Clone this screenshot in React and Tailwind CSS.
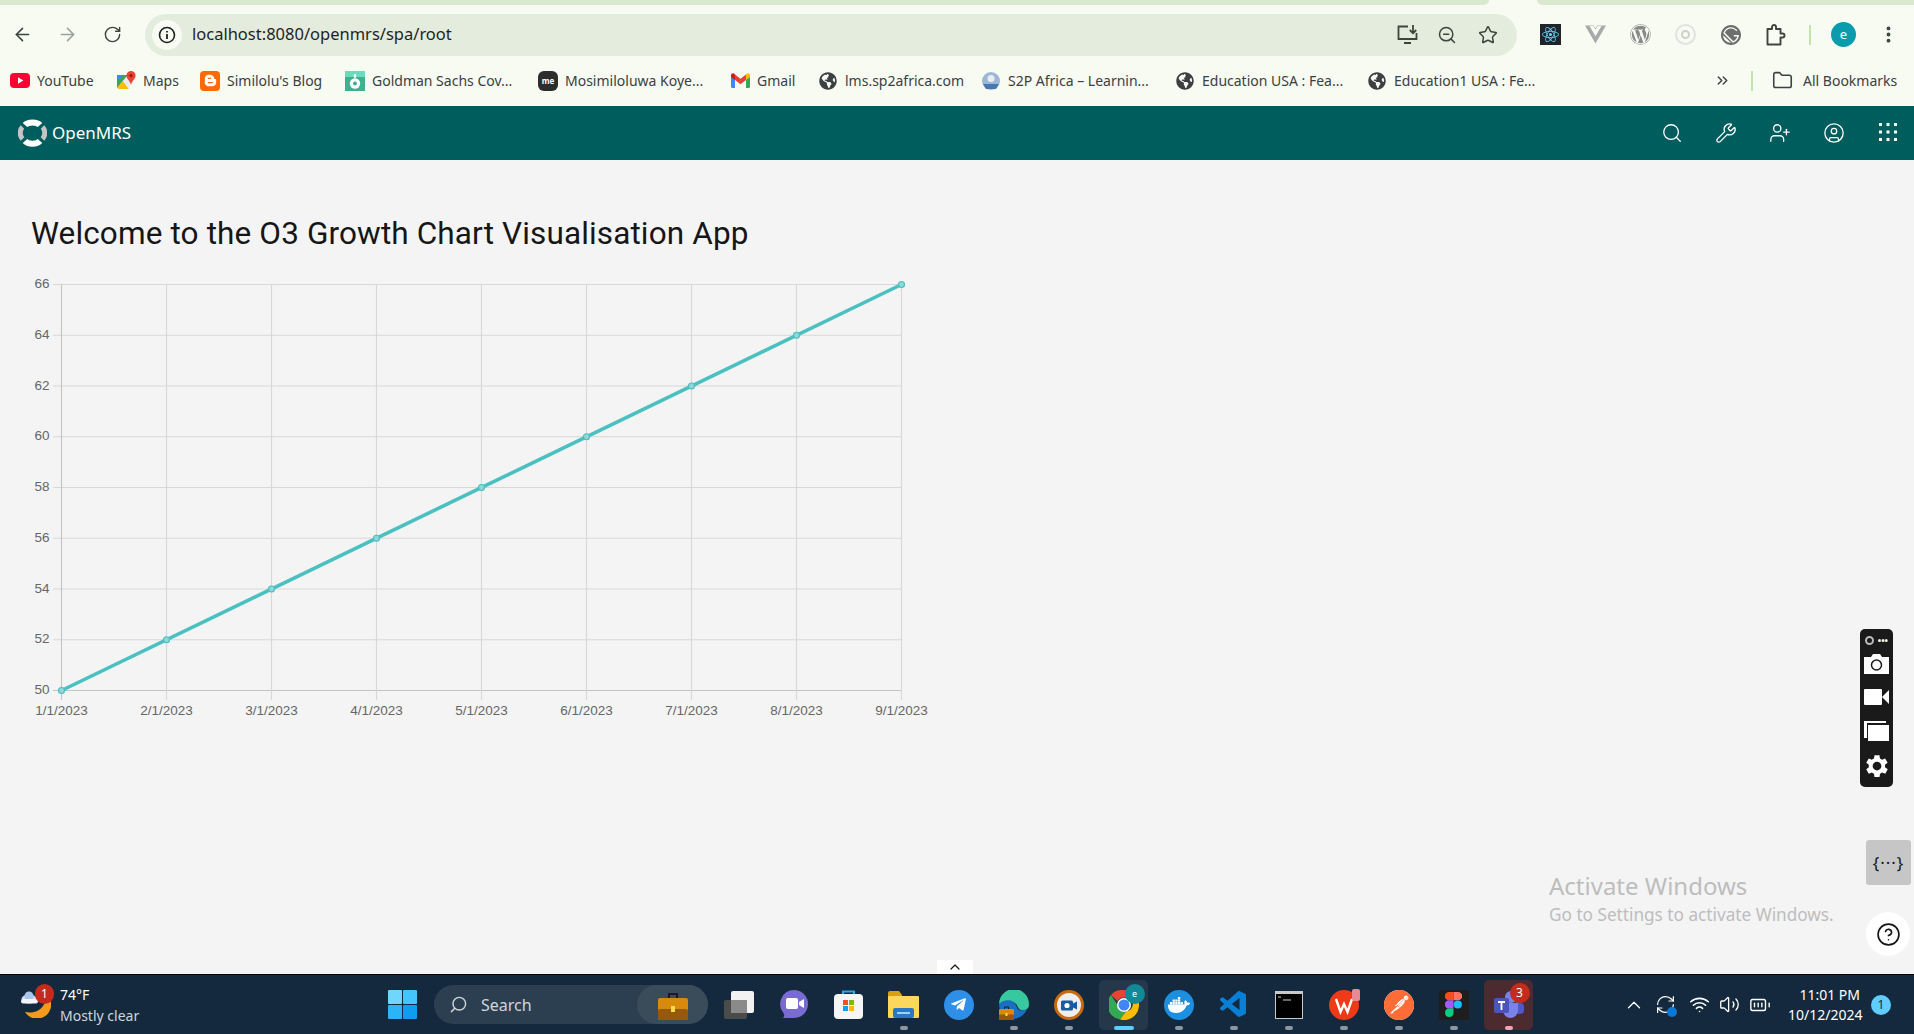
import { ArrowLeft, ArrowRight, RotateCw, RefreshCw, Search, Star, ZoomOut, Wrench, UserPlus, CircleUser, EllipsisVertical, ChevronsRight, Folder, ChevronUp, CircleHelp, Wifi, Volume2, BatteryFull } from "lucide-react";
import { FaBloggerB, FaGlobeAmericas, FaWordpress, FaTelegramPlane } from "react-icons/fa";
import { SiReact, SiVuedotjs, SiGatsby, SiDocker, SiPostman } from "react-icons/si";
import { VscVscode } from "react-icons/vsc";

const uiFont = "font-['Noto_Sans',sans-serif]";

// Chart geometry, in page coordinates
const xLabels = ["1/1/2023", "2/1/2023", "3/1/2023", "4/1/2023", "5/1/2023", "6/1/2023", "7/1/2023", "8/1/2023", "9/1/2023"];
const yLabels = [66, 64, 62, 60, 58, 56, 54, 52, 50];
const plotLeft = 61.5;
const plotRight = 901.5;
const plotTop = 284.5;
const plotBottom = 690.5;
const stepX = (plotRight - plotLeft) / 8;
const stepY = (plotBottom - plotTop) / 8;

function YouTubeIcon() {
  return (
    <svg width="20" height="15" viewBox="0 0 20 15">
      <rect width="20" height="15" rx="4" fill="#ff0033" />
      <path d="M8 4.2 13.4 7.5 8 10.8z" fill="#fff" />
    </svg>
  );
}

function MapsIcon() {
  return (
    <svg width="20" height="20" viewBox="0 0 20 20">
      <path d="M1 4h11l-11 13z" fill="#34a853" />
      <path d="M1 17 7 10l6 8H3z" fill="#fbbc04" />
      <path d="M7 10l5-6 3 7-2 7z" fill="#e8eaed" />
      <path d="M15 0a4.6 4.6 0 0 1 4.6 4.6c0 3.2-3.4 5-4.6 9.4-1.2-4.4-4.6-6.2-4.6-9.4A4.6 4.6 0 0 1 15 0z" fill="#ea4335" />
      <circle cx="15" cy="4.6" r="1.6" fill="#8f1d13" />
      <path d="M1 4h6L4 8H1z" fill="#4285f4" />
    </svg>
  );
}

function BloggerIcon() {
  return (
    <span className="flex h-[20px] w-[20px] items-center justify-center rounded-[4px] bg-[#ff6a00] text-[13px] text-white">
      <FaBloggerB />
    </span>
  );
}

function GoldmanIcon() {
  return (
    <svg width="20" height="20" viewBox="0 0 20 20">
      <rect width="20" height="20" fill="#3fb08f" />
      <rect width="20" height="6" fill="#6bdcbb" />
      <circle cx="10" cy="12.5" r="5.2" fill="#fff" />
      <rect x="8.8" y="3" width="2.4" height="4" rx="1.2" fill="#fff" />
      <circle cx="10" cy="12.5" r="2" fill="#3fb08f" />
    </svg>
  );
}

function MeIcon() {
  return (
    <span className={`flex h-[20px] w-[20px] items-center justify-center rounded-[6px] bg-[#2d2d2d] text-[8px] font-bold leading-none text-white ${uiFont}`}>
      me
    </span>
  );
}

function GmailIcon() {
  return (
    <svg width="19" height="15" viewBox="0 0 19 15">
      <path d="M0 2v11.5A1.5 1.5 0 0 0 1.5 15H4V6z" fill="#4285f4" />
      <path d="M15 6v9h2.5a1.500 1.500 0 0 0 1.500-1.500V2z" fill="#34a853" />
      <path d="M4 7V1.500L9.500 5.700 15 1.500V7L9.500 11.200z" fill="#ea4335" />
      <path d="M0 2.200C0 .6 1.800-.4 3 .6L4 1.400V7L0 4z" fill="#c5221f" />
      <path d="M19 2.200C19 .6 17.200-.4 16 .6L15 1.400V7l4-3z" fill="#fbbc04" />
    </svg>
  );
}

function GlobeIcon() {
  return <FaGlobeAmericas className="text-[18px] text-[#3c4043]" />;
}

function S2pIcon() {
  return (
    <svg width="20" height="20" viewBox="0 0 20 20">
      <circle cx="10" cy="10" r="9" fill="#9db8d6" />
      <circle cx="10" cy="7.500" r="3.500" fill="#e7edf3" />
      <path d="M2 13h16l-3 5H5z" fill="#4a78ad" />
    </svg>
  );
}

const bookmarks = [
  { label: "YouTube", icon: <YouTubeIcon />, width: "w-[106px]" },
  { label: "Maps", icon: <MapsIcon />, width: "w-[84px]" },
  { label: "Similolu's Blog", icon: <BloggerIcon />, width: "w-[145px]" },
  { label: "Goldman Sachs Cov...", icon: <GoldmanIcon />, width: "w-[193px]" },
  { label: "Mosimiloluwa Koye...", icon: <MeIcon />, width: "w-[192px]" },
  { label: "Gmail", icon: <GmailIcon />, width: "w-[88px]" },
  { label: "lms.sp2africa.com", icon: <GlobeIcon />, width: "w-[163px]" },
  { label: "S2P Africa – Learnin...", icon: <S2pIcon />, width: "w-[194px]" },
  { label: "Education USA : Fea...", icon: <GlobeIcon />, width: "w-[192px]" },
  { label: "Education1 USA : Fe...", icon: <GlobeIcon />, width: "w-[180px]" },
];

function InfoIcon() {
  return (
    <span className="flex h-[30px] w-[30px] items-center justify-center rounded-full bg-[#f7fbf1]">
      <svg width="18" height="18" viewBox="0 0 18 18" fill="none" stroke="#1f1f1f" strokeWidth="1.600">
        <circle cx="9" cy="9" r="7.500" />
        <path d="M9 8v5M9 5v1.600" strokeWidth="1.800" />
      </svg>
    </span>
  );
}

function InstallIcon() {
  return (
    <svg width="21" height="19" viewBox="0 0 21 19" fill="none" stroke="#3d463d" strokeWidth="1.800">
      <path d="M11 1.500H1.500v12.500h18V8M7 18h7" />
      <path d="M16 0v8M12.800 5 16 8.300 19.200 5" />
    </svg>
  );
}

function ExtensionIcon() {
  return (
    <svg width="20" height="22" viewBox="0 0 20 22" fill="none" stroke="#3d463d" strokeWidth="1.900" strokeLinejoin="round">
      <path d="M1.500 5h4.500V3a2 2 0 0 1 4 0v2h4.500v4.500H16.500a2 2 0 0 1 0 4h-2V20.500H1.500z" />
    </svg>
  );
}

function WindowsLogo() {
  return (
    <svg width="29" height="29" viewBox="0 0 29 29">
      <rect width="14" height="14" rx="1" fill="#6fd6ff" />
      <rect x="15" width="14" height="14" rx="1" fill="#45c3fb" />
      <rect y="15" width="14" height="14" rx="1" fill="#2cb4f6" />
      <rect x="15" y="15" width="14" height="14" rx="1" fill="#0f9df0" />
    </svg>
  );
}

function WeatherIcon() {
  return (
    <svg width="30" height="29" viewBox="0 0 30 29">
      <path d="M28 8a14 14 0 0 1-24 15c5 1 13 1 18-6 2-3 3-6 6-9z" fill="#f39a1e" />
      <ellipse cx="8" cy="10" rx="7.500" ry="4.500" fill="#c8dcf2" />
      <circle cx="8" cy="7" r="4.500" fill="#a9c6ea" />
      <rect y="10" width="17" height="4.500" rx="2.200" fill="#f1f6fb" />
    </svg>
  );
}

function Briefcase({ size = 30 }) {
  return (
    <svg width={size} height={size} viewBox="0 0 30 30">
      <path d="M11 8V4h8v4" fill="none" stroke="#1c1c1c" strokeWidth="2" />
      <rect y="8" width="30" height="22" rx="2" fill="#d88a0c" />
      <rect y="19" width="30" height="11" rx="2" fill="#96580a" />
      <rect x="13" y="16" width="4" height="6" fill="#ffd94a" />
    </svg>
  );
}

function TaskViewIcon() {
  return (
    <svg width="30" height="28" viewBox="0 0 30 28">
      <rect y="9" width="23" height="19" rx="2" fill="#4b4b4b" />
      <rect x="7" width="23" height="22" rx="2" fill="#f2f2f2" />
      <rect x="7" y="9" width="16" height="13" fill="#8a8a8a" />
    </svg>
  );
}

function ChatIcon() {
  return (
    <svg width="30" height="29" viewBox="0 0 30 29">
      <path d="M15 0a14 14 0 0 1 0 28H4c2-2 1-4 .5-5A14 14 0 0 1 15 0z" fill="#7a6bd0" />
      <rect x="7" y="8" width="12" height="11" rx="2" fill="#fff" />
      <path d="m20 12 5-3v9l-5-3z" fill="#fff" />
    </svg>
  );
}

function StoreIcon() {
  return (
    <svg width="29" height="29" viewBox="0 0 29 29">
      <path d="M9 5V1.500h11V5" fill="none" stroke="#2fa8e0" strokeWidth="2.200" />
      <rect y="4" width="29" height="25" rx="4" fill="#f5f5f5" />
      <rect x="9" y="10" width="5" height="5" fill="#f25022" />
      <rect x="15" y="10" width="5" height="5" fill="#7fba00" />
      <rect x="9" y="16" width="5" height="5" fill="#00a4ef" />
      <rect x="15" y="16" width="5" height="5" fill="#ffb900" />
    </svg>
  );
}

function ExplorerIcon() {
  return (
    <svg width="31" height="27" viewBox="0 0 31 27">
      <path d="M0 2a2 2 0 0 1 2-2h9l3 4v6H0z" fill="#d9a010" />
      <rect y="5" width="31" height="22" rx="1" fill="#fbd75b" />
      <rect x="5" y="17" width="21" height="10" rx="2" fill="#2a78c4" />
      <rect x="9" y="21" width="13" height="2" fill="#9fd0f5" />
    </svg>
  );
}

function TelegramIcon() {
  return (
    <span className="flex h-[30px] w-[30px] items-center justify-center rounded-full bg-[#2e8fe8] text-[17px] text-white">
      <FaTelegramPlane />
    </span>
  );
}

function EdgeIcon() {
  return (
    <span className="relative block h-[30px] w-[30px]">
      <svg width="30" height="30" viewBox="0 0 30 30">
        <path d="M0 14A15 15 0 0 1 30 14c0 4-2 6-6 6-6 0-4-4-8-7-5-3-14-1-16 1z" fill="#36c9a0" />
        <path d="M0 14c3-4 11-5 15-2 3 3 2 7 6 8.500l7-1C25 26 18 30 11 28.500 5 27 0 21 0 14z" fill="#1b6fc0" />
      </svg>
      <span className="absolute bottom-0 left-0">
        <Briefcase size={15} />
      </span>
    </span>
  );
}

function CameraIcon() {
  return (
    <svg width="30" height="30" viewBox="0 0 30 30">
      <circle cx="15" cy="15" r="13.500" fill="#eeeeee" stroke="#c96a10" strokeWidth="3" />
      <rect x="7" y="10.500" width="12" height="10" rx="1.500" fill="#1a5aa0" />
      <circle cx="13" cy="15.500" r="2.600" fill="#fff" />
      <path d="m19 13.500 4-2v8l-4-2z" fill="#1a5aa0" />
    </svg>
  );
}

function ChromeIcon() {
  return (
    <span className="relative block h-[30px] w-[30px]">
      <svg width="30" height="30" viewBox="0 0 30 30">
        <path d="M15 0a15 15 0 0 1 13 7.500H15A7.500 7.500 0 0 0 8.500 11L2 5a15 15 0 0 1 13-5z" fill="#ea4335" />
        <path d="M2 5l6.500 10a7.500 7.500 0 0 0 8 7.300L11 29.500A15 15 0 0 1 2 5z" fill="#34a853" />
        <path d="M28 7.500A15 15 0 0 1 11 29.500l6-8a7.500 7.500 0 0 0 3-14z" fill="#fbbc04" />
        <circle cx="15" cy="15" r="7" fill="#fff" />
        <circle cx="15" cy="15" r="5.500" fill="#4285f4" />
      </svg>
      <span className={`absolute -right-[6px] -top-[6px] flex h-[20px] w-[20px] items-center justify-center rounded-full bg-[#0f8a96] text-[9px] text-white ${uiFont}`}>
        e
      </span>
    </span>
  );
}

function DockerIcon() {
  return (
    <span className="flex h-[30px] w-[30px] items-center justify-center rounded-full bg-[#1d8fe0] text-[22px] text-white">
      <SiDocker />
    </span>
  );
}

function TerminalIcon() {
  return (
    <svg width="28" height="28" viewBox="0 0 28 28">
      <rect width="28" height="28" fill="#c9c9c9" />
      <rect x="1" y="3" width="26" height="24" fill="#000" />
      <path d="M3 6h3M8 9h8" stroke="#d0d0d0" strokeWidth="1" />
    </svg>
  );
}

function WpsIcon() {
  return (
    <span className="relative block h-[30px] w-[30px]">
      <svg width="30" height="30" viewBox="0 0 30 30">
        <circle cx="15" cy="15" r="15" fill="#f03a17" />
        <path d="M7 9l4.500 13 3.500-8 3.500 8L23 9" fill="none" stroke="#fff" strokeWidth="2.400" />
      </svg>
      <span className="absolute -right-[1px] -top-[1px] h-[12px] w-[8px] rounded-[2px] bg-[#e88a94]" />
    </span>
  );
}

function PostmanIcon() {
  return (
    <span className="flex h-[30px] w-[30px] items-center justify-center rounded-full bg-white text-[30px] text-[#ff6c37]">
      <SiPostman />
    </span>
  );
}

function FigmaIcon() {
  return (
    <span className="flex h-[30px] w-[30px] items-center justify-center rounded-[3px] bg-[#1e1e1e]">
      <svg width="17" height="25" viewBox="0 0 17 25">
        <path d="M4 0h4.500v8.300H4A4.100 4.100 0 0 1 4 0z" fill="#f24e1e" />
        <path d="M8.500 0H13a4.100 4.100 0 0 1 0 8.300H8.500z" fill="#ff7262" />
        <path d="M4 8.300h4.500v8.300H4A4.100 4.100 0 0 1 4 8.300z" fill="#a259ff" />
        <circle cx="12.800" cy="12.500" r="4.100" fill="#1abcfe" />
        <path d="M4 16.600h4.500v4.200A4.200 4.200 0 1 1 4 16.600z" fill="#0acf83" />
      </svg>
    </span>
  );
}

function TeamsIcon() {
  return (
    <span className="relative block h-[27px] w-[30px]">
      <svg width="30" height="27" viewBox="0 0 30 27">
        <circle cx="17" cy="6" r="6" fill="#7b83eb" />
        <circle cx="25" cy="8" r="4.500" fill="#5059c9" />
        <rect x="21" y="12" width="9" height="11" rx="4" fill="#5059c9" />
        <path d="M9 12h15v7a7.500 8 0 0 1-15 0z" fill="#7b83eb" />
        <rect y="7" width="15" height="15" rx="2" fill="#4b53bc" />
        <path d="M4 11h7M7.500 11v8" stroke="#fff" strokeWidth="1.800" />
      </svg>
      <span className={`absolute -right-[6px] -top-[8px] flex h-[20px] w-[20px] items-center justify-center rounded-full bg-[#c42b1c] text-[12px] text-white ${uiFont}`}>
        3
      </span>
    </span>
  );
}

const taskbarApps = [
  { icon: <TaskViewIcon /> },
  { icon: <ChatIcon /> },
  { icon: <StoreIcon /> },
  { icon: <ExplorerIcon />, dot: "bg-[#8d97a1] w-[8px]" },
  { icon: <TelegramIcon /> },
  { icon: <EdgeIcon />, dot: "bg-[#8d97a1] w-[8px]" },
  { icon: <CameraIcon />, dot: "bg-[#8d97a1] w-[8px]" },
  { icon: <ChromeIcon />, dot: "bg-[#5fcdff] w-[20px]", tile: "bg-[#24384a]" },
  { icon: <DockerIcon />, dot: "bg-[#8d97a1] w-[8px]" },
  { icon: <VscVscode className="text-[32px] text-[#0a7fd6]" />, dot: "bg-[#8d97a1] w-[8px]" },
  { icon: <TerminalIcon />, dot: "bg-[#8d97a1] w-[8px]" },
  { icon: <WpsIcon />, dot: "bg-[#8d97a1] w-[8px]" },
  { icon: <PostmanIcon />, dot: "bg-[#8d97a1] w-[8px]" },
  { icon: <FigmaIcon />, dot: "bg-[#8d97a1] w-[8px]" },
  { icon: <TeamsIcon />, dot: "bg-[#f4a3ad] w-[8px]", tile: "bg-[#4b2a30]" },
];

function GrowthChart() {
  return (
    <svg width="920" height="460" viewBox="31 270 920 460" className="mt-[15px] block">
      {/* GRID */}
      {yLabels.map((label, i) => (
        <g key={label}>
          <line x1="53" x2={plotRight} y1={plotTop + i * stepY} y2={plotTop + i * stepY} stroke={i === 8 ? "#c4c4c4" : "#d8d8d8"} strokeWidth="1.100" />
          <text x="49.500" y={plotTop + i * stepY + 3.500} textAnchor="end" fontSize="13.500" fill="#666" fontFamily="'Liberation Sans', sans-serif">
            {label}
          </text>
        </g>
      ))}
      {xLabels.map((label, i) => (
        <g key={label}>
          <line x1={plotLeft + i * stepX} x2={plotLeft + i * stepX} y1={plotTop} y2="700" stroke={i === 0 ? "#c4c4c4" : "#d8d8d8"} strokeWidth="1.100" />
          <text x={plotLeft + i * stepX} y="715" textAnchor="middle" fontSize="13.500" fill="#666" fontFamily="'Liberation Sans', sans-serif">
            {label}
          </text>
        </g>
      ))}

      {/* DATA */}
      <line x1={plotLeft} y1={plotBottom} x2={plotRight} y2={plotTop} stroke="#4bc0c0" strokeWidth="3.600" />
      {xLabels.map((label, i) => (
        <circle key={label} cx={plotLeft + i * stepX} cy={plotBottom - i * stepY} r="3" fill="#93d6d6" stroke="#4bc0c0" strokeWidth="1.200" />
      ))}
    </svg>
  );
}

function App() {
  return (
    <div className={`flex h-screen flex-col overflow-hidden bg-[#f4f4f4] ${uiFont}`}>
      {/* WINDOW TOP EDGE */}
      <div className="flex h-[5px] shrink-0 bg-[#f7fbf1]">
        <div className="w-[1489px] rounded-br-[6px] bg-[#d9e8cf]" />
        <div className="ml-[48px] flex-1 rounded-bl-[6px] bg-[#d9e8cf]" />
      </div>

      {/* BROWSER TOOLBAR */}
      <div className="flex h-[55px] shrink-0 items-center bg-[#f7fbf1] pl-[12px] pt-[4px] text-[#3d463d]">
        <ArrowLeft size={21} strokeWidth={1.800} />
        <ArrowRight size={21} strokeWidth={1.800} className="ml-[24px] text-[#9aa39a]" />
        <RotateCw size={19} strokeWidth={1.800} className="ml-[25px]" />
        <div className="ml-[23px] flex h-[42px] w-[1372px] items-center rounded-full bg-[#e3ecdd] pl-[7px] pr-[19px]">
          <InfoIcon />
          <span className="ml-[10px] flex-1 text-[16.500px] text-[#1f1f1f]">localhost:8080/openmrs/spa/root</span>
          <InstallIcon />
          <ZoomOut size={20} strokeWidth={1.800} className="ml-[19px]" />
          <Star size={20} strokeWidth={1.800} className="ml-[21px]" />
        </div>
        <span className="ml-[23px] flex h-[21px] w-[21px] items-center justify-center bg-[#20232a] text-[17px] text-[#61dafb]">
          <SiReact />
        </span>
        <SiVuedotjs className="ml-[24px] text-[21px] text-[#a9a9a9]" />
        <FaWordpress className="ml-[24px] text-[21px] text-[#8a8a8a]" />
        <span className="ml-[24px] flex h-[21px] w-[21px] items-center justify-center rounded-full border-2 border-[#e2e2e2]">
          <span className="h-[9px] w-[9px] rounded-full border-2 border-[#cfcfcf]" />
        </span>
        <SiGatsby className="ml-[25px] text-[20px] text-[#6e6e6e]" />
        <span className="ml-[25px] flex"><ExtensionIcon /></span>
        <span className="ml-[23px] h-[20px] w-[2px] bg-[#bfe6a8]" />
        <span className="ml-[20px] flex h-[25px] w-[25px] items-center justify-center rounded-full bg-[#0a9bac] text-[13px] text-white">e</span>
        <EllipsisVertical size={21} strokeWidth={2.400} className="ml-[22px]" />
      </div>

      {/* BOOKMARKS BAR */}
      <div className="flex h-[46px] shrink-0 items-center bg-[#f7fbf1] pl-[10px] pb-[5px] text-[14px] text-[#3c4043]">
        {bookmarks.map((bookmark) => (
          <div key={bookmark.label} className={`flex items-center gap-[7px] whitespace-nowrap ${bookmark.width}`}>
            <span className="flex w-[20px] justify-center">{bookmark.icon}</span>
            <span>{bookmark.label}</span>
          </div>
        ))}
        <ChevronsRight size={17} className="ml-[167px]" />
        <span className="ml-[20px] h-[20px] w-[2px] bg-[#bfe6a8]" />
        <Folder size={21} strokeWidth={1.800} className="ml-[19px]" />
        <span className="ml-[10px] whitespace-nowrap">All Bookmarks</span>
      </div>

      {/* OPENMRS HEADER */}
      <header className="flex h-[54px] shrink-0 items-center justify-between bg-[#005d5d] text-white">
        <div className="ml-[18px] flex items-center gap-[5px]">
          <svg width="29" height="28" viewBox="0 0 29 28" fill="none">
            <path d="M4.500 8C1.500 11 1.500 17 4.500 20" stroke="#c4c4c4" strokeWidth="5" />
            <path d="M24.500 8C27.500 11 27.500 17 24.500 20" stroke="#c4c4c4" strokeWidth="5" />
            <path d="M7 6C10 2.500 19 2.500 22 6" stroke="#fff" strokeWidth="6" />
            <path d="M7 22C10 25.500 19 25.500 22 22" stroke="#fff" strokeWidth="6" />
          </svg>
          <span className="text-[17px]">OpenMRS</span>
        </div>
        <div className="mr-[-1px] flex">
          <span className="flex w-[54px] justify-center"><Search size={22} strokeWidth={1.400} /></span>
          <span className="flex w-[54px] justify-center"><Wrench size={22} strokeWidth={1.400} /></span>
          <span className="flex w-[54px] justify-center"><UserPlus size={22} strokeWidth={1.400} /></span>
          <span className="flex w-[54px] justify-center"><CircleUser size={22} strokeWidth={1.400} /></span>
          <span className="flex w-[54px] justify-center">
            <svg width="20" height="20" viewBox="0 0 20 20" fill="#fff">
              {[1, 8.500, 16].map((y) =>
                [1, 8.500, 16].map((x) => <rect key={`${x}-${y}`} x={x} y={y} width="3" height="3" />)
              )}
            </svg>
          </span>
        </div>
      </header>

      {/* PAGE CONTENT */}
      <main className="relative flex-1 pl-[31px] pt-[53px]">
        <h1 className="font-['Roboto',sans-serif] text-[31.500px] leading-[42px] tracking-[0.13px] text-[#161616]">
          Welcome to the O3 Growth Chart Visualisation App
        </h1>

        <GrowthChart />

        {/* SCREEN RECORDER WIDGET */}
        <div className="absolute left-[1860px] top-[469px] flex h-[158px] w-[33px] flex-col items-center rounded-[5px] bg-[#1a1a1a] pt-[6px] text-white">
          <div className="flex h-[11px] w-full items-center justify-between px-[5px]">
            <span className="h-[9px] w-[9px] rounded-full border-2 border-[#bbb]" />
            <span className="text-[9px] font-bold leading-none tracking-[0px]">•••</span>
          </div>
          <svg width="25" height="20" viewBox="0 0 25 20" className="mt-[8px]">
            <path d="M0 3h7l2-3h7l2 3h7v17H0z" fill="#fff" />
            <circle cx="12.500" cy="11" r="5" fill="#fff" stroke="#1a1a1a" strokeWidth="1.500" />
          </svg>
          <svg width="25" height="16" viewBox="0 0 25 16" className="mt-[15px]" fill="#fff">
            <rect width="18" height="16" rx="1" />
            <path d="m18 8 7-7v14z" />
          </svg>
          <svg width="25" height="20" viewBox="0 0 25 20" className="mt-[16px]" fill="#fff">
            <path d="M0 0h22v2H3v15H0z" />
            <rect x="4" y="4" width="21" height="16" />
          </svg>
          <svg width="30" height="30" viewBox="0 0 24 24" className="mt-[10px]" fill="#fff">
            <path d="M19.400 13a7.600 7.600 0 0 0 0-2l2.100-1.600-2-3.500-2.500 1a7.500 7.500 0 0 0-1.700-1L15 3.300h-4l-.4 2.600a7.500 7.500 0 0 0-1.700 1l-2.500-1-2 3.500L6.500 11a7.600 7.600 0 0 0 0 2l-2.100 1.600 2 3.500 2.500-1a7.500 7.500 0 0 0 1.700 1l.4 2.600h4l.4-2.600a7.500 7.500 0 0 0 1.700-1l2.500 1 2-3.500zM13 15.500a3.500 3.500 0 1 1 0-7 3.500 3.500 0 0 1 0 7z" transform="translate(-1 0)" />
          </svg>
        </div>

        {/* DEV TOOLS BUTTON */}
        <div className="absolute left-[1866px] top-[680px] flex h-[45px] w-[45px] items-center justify-center rounded-[3px] bg-[#c6c6c6] text-[17px] tracking-[1px] text-[#161616]">
          {"{···}"}
        </div>

        {/* ACTIVATE WINDOWS WATERMARK */}
        <div className="absolute left-[1549px] top-[710px] text-[#bdbdbd]">
          <p className="text-[24px] leading-[32px]">Activate Windows</p>
          <p className="mt-[1px] text-[17.200px] leading-[24px]">Go to Settings to activate Windows.</p>
        </div>

        {/* HELP BUTTON */}
        <div className="absolute left-[1866px] top-[752px] flex h-[44px] w-[44px] items-center justify-center rounded-full bg-white">
          <CircleHelp size={25} strokeWidth={1.600} className="text-[#161616]" />
        </div>

        {/* COLLAPSE TAB */}
        <div className="absolute bottom-0 left-[937px] flex h-[14px] w-[36px] items-center justify-center bg-white">
          <ChevronUp size={16} strokeWidth={1.800} className="text-[#161616]" />
        </div>
      </main>

      {/* WINDOWS TASKBAR */}
      <footer className="relative flex h-[60px] shrink-0 items-center border-t border-[#000] bg-[#14293d] text-white">
        <div className="absolute left-[21px] top-[14px]">
          <WeatherIcon />
          <span className="absolute -top-[5px] left-[14px] flex h-[20px] w-[19px] items-center justify-center rounded-full bg-[#c42b1c] text-[12px]">1</span>
        </div>
        <div className="ml-[60px] w-[100px] text-[14px] leading-[21px]">
          <p>74°F</p>
          <p className="text-[#d0d6db]">Mostly clear</p>
        </div>

        <div className="ml-[228px]">
          <WindowsLogo />
        </div>

        <div className="ml-[17px] flex h-[39px] w-[274px] items-center rounded-full bg-[#2b3f50] pl-[15px] text-[16px] text-[#d0d6db]">
          <Search size={19} strokeWidth={1.800} className="-scale-x-100" />
          <span className="ml-[13px] flex-1">Search</span>
          <span className="flex h-[39px] w-[71px] items-center justify-center rounded-full bg-[#3a4b5a]">
            <Briefcase size={30} />
          </span>
        </div>

        <div className="ml-[3px] flex">
          {taskbarApps.map((app, i) => (
            <div key={i} className="relative flex h-[59px] w-[55px] items-center justify-center">
              {app.tile && <span className={`absolute inset-x-[3px] bottom-[4px] top-[5px] rounded-[5px] ${app.tile}`} />}
              <span className="relative flex items-center justify-center">{app.icon}</span>
              {app.dot && <span className={`absolute bottom-[4px] h-[4px] rounded-full ${app.dot}`} />}
            </div>
          ))}
        </div>

        <div className="ml-[87px] flex items-center">
          <ChevronUp size={22} strokeWidth={1.400} />
          <div className="relative ml-[10px]">
            <RefreshCw size={21} strokeWidth={1.400} />
            <span className="absolute -bottom-[2px] -right-[1px] h-[10px] w-[10px] rounded-full bg-[#0a78d6]" />
          </div>
          <Wifi size={21} strokeWidth={1.800} className="ml-[13px]" />
          <Volume2 size={21} strokeWidth={1.500} className="ml-[9px]" />
          <BatteryFull size={22} strokeWidth={1.500} className="ml-[9px]" />
        </div>

        <div className="ml-[17px] w-[72px] text-right text-[14px] leading-[20px]">
          <p>11:01 PM</p>
          <p>10/12/2024</p>
        </div>
        <span className="ml-[11px] flex h-[20px] w-[20px] items-center justify-center rounded-full bg-[#60cdff] text-[12px] text-[#14293d]">1</span>
      </footer>
    </div>
  );
}

export default App;
